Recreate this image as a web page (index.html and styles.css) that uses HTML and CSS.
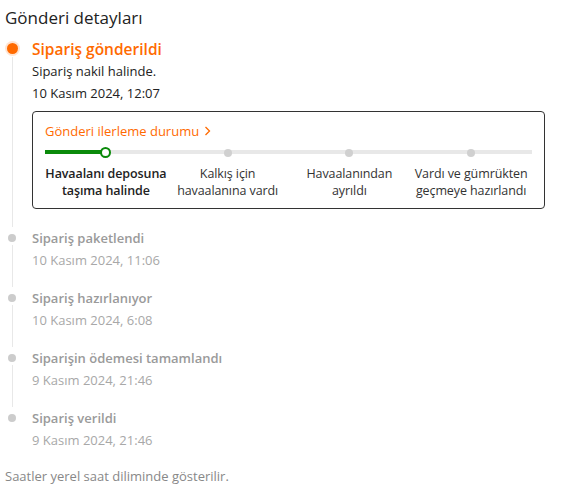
FILE: index.html
```html
<!DOCTYPE html>
<html lang="tr">
<head>
    <meta charset="UTF-8">
    <meta name="viewport" content="width=device-width, initial-scale=1.0">
    <title>Gönderi detayları</title>
    <link rel="stylesheet" href="styles.css">
</head>
<body>
    <h2 class="page-title">Gönderi detayları</h2>

    <div class="timeline">
        <div class="step step-current">
            <div class="marker">
                <span class="dot"></span>
                <span class="line"></span>
            </div>
            <div class="step-body">
                <div class="step-title">Sipariş gönderildi</div>
                <div class="step-text">Sipariş nakil halinde.</div>
                <div class="step-text">10 Kasım 2024, 12:07</div>

                <div class="progress-card">
                    <div class="progress-title">
                        Gönderi ilerleme durumu
                        <svg width="7" height="10" viewBox="0 0 7 10"><path d="M1.5 1 L5.5 5 L1.5 9" fill="none" stroke="currentColor" stroke-width="1.3"/></svg>
                    </div>
                    <div class="track">
                        <div class="track-cell"><span class="track-dot active"></span></div>
                        <div class="track-cell"><span class="track-dot"></span></div>
                        <div class="track-cell"><span class="track-dot"></span></div>
                        <div class="track-cell"><span class="track-dot"></span></div>
                    </div>
                    <div class="labels">
                        <div class="label active">Havaalanı deposuna<br>taşıma halinde</div>
                        <div class="label">Kalkış için<br>havaalanına vardı</div>
                        <div class="label">Havaalanından<br>ayrıldı</div>
                        <div class="label">Vardı ve gümrükten<br>geçmeye hazırlandı</div>
                    </div>
                </div>
            </div>
        </div>

        <div class="step">
            <div class="marker">
                <span class="dot"></span>
                <span class="line"></span>
            </div>
            <div class="step-body">
                <div class="step-title">Sipariş paketlendi</div>
                <div class="step-date">10 Kasım 2024, 11:06</div>
            </div>
        </div>

        <div class="step">
            <div class="marker">
                <span class="dot"></span>
                <span class="line"></span>
            </div>
            <div class="step-body">
                <div class="step-title">Sipariş hazırlanıyor</div>
                <div class="step-date">10 Kasım 2024, 6:08</div>
            </div>
        </div>

        <div class="step">
            <div class="marker">
                <span class="dot"></span>
                <span class="line"></span>
            </div>
            <div class="step-body">
                <div class="step-title">Siparişin ödemesi tamamlandı</div>
                <div class="step-date">9 Kasım 2024, 21:46</div>
            </div>
        </div>

        <div class="step step-last">
            <div class="marker">
                <span class="dot"></span>
            </div>
            <div class="step-body">
                <div class="step-title">Sipariş verildi</div>
                <div class="step-date">9 Kasım 2024, 21:46</div>
            </div>
        </div>
    </div>

    <p class="note">Saatler yerel saat diliminde gösterilir.</p>
</body>
</html>
```

FILE: styles.css
```css
:root {
    --orange: #ff6a00;
    --green: #0a8a0a;
    --text: #222222;
    --muted: #9a9a9a;
    --line: #e8e8e8;
}
body {
    font-family: 'Open Sans', 'Noto Sans', sans-serif;
    margin: 0;
    padding: 0 18px 0 5px;
    background: #ffffff;
    color: var(--text);
    font-size: 13px;
}
.page-title {
    margin: 6px 0 8px;
    font-size: 17px;
    line-height: 24px;
    font-weight: 400;
}
.step {
    display: grid;
    grid-template-columns: 14px 1fr;
    column-gap: 13px;
    padding-bottom: 16px;
}
.step-current {
    padding-bottom: 18px;
}
.step-last {
    padding-bottom: 0;
}
.marker {
    display: flex;
    flex-direction: column;
    align-items: center;
    margin-bottom: -16px;
}
.step-current .marker {
    margin-bottom: -18px;
}
.step-last .marker {
    margin-bottom: 0;
}
.dot {
    width: 8px;
    height: 8px;
    border-radius: 50%;
    background: #cccccc;
    margin-top: 7px;
    flex-shrink: 0;
}
.step-current .dot {
    width: 11px;
    height: 11px;
    margin-top: 5px;
    background: var(--orange);
    box-shadow: 0 0 0 2px rgba(255, 106, 0, 0.18);
}
.line {
    flex: 1;
    width: 1px;
    margin-top: 3px;
    background: var(--line);
}
.step-title {
    line-height: 22px;
    font-weight: 600;
    color: var(--muted);
}
.step-current .step-title {
    font-size: 15.5px;
    color: var(--orange);
}
.step-text {
    line-height: 22px;
}
.step-date {
    line-height: 22px;
    color: #a8a8a8;
}
.progress-card {
    margin-top: 7px;
    border: 1px solid #333333;
    border-radius: 4px;
    padding: 9px 12px 9px;
}
.progress-title {
    color: var(--orange);
    line-height: 20px;
    display: flex;
    align-items: center;
    gap: 5px;
}
.track {
    display: grid;
    grid-template-columns: repeat(4, 1fr);
    height: 10px;
    margin-top: 6px;
    background-image: linear-gradient(to right, var(--green) 12.5%, var(--line) 12.5%);
    background-size: 100% 4px;
    background-position: center;
    background-repeat: no-repeat;
}
.track-cell {
    display: flex;
    justify-content: center;
    align-items: center;
}
.track-dot {
    width: 8px;
    height: 8px;
    border-radius: 50%;
    background: #d0d0d0;
}
.track-dot.active {
    width: 7px;
    height: 7px;
    border: 2px solid var(--green);
    background: #ffffff;
}
.labels {
    display: grid;
    grid-template-columns: repeat(4, 1fr);
    margin-top: 8px;
}
.label {
    text-align: center;
    line-height: 17px;
    font-size: 12.5px;
    color: #333333;
    white-space: nowrap;
    letter-spacing: -0.1px;
}
.label.active {
    font-weight: 600;
    color: var(--text);
}
.note {
    margin: 15px 0 0;
    line-height: 20px;
    color: #888888;
}
```
